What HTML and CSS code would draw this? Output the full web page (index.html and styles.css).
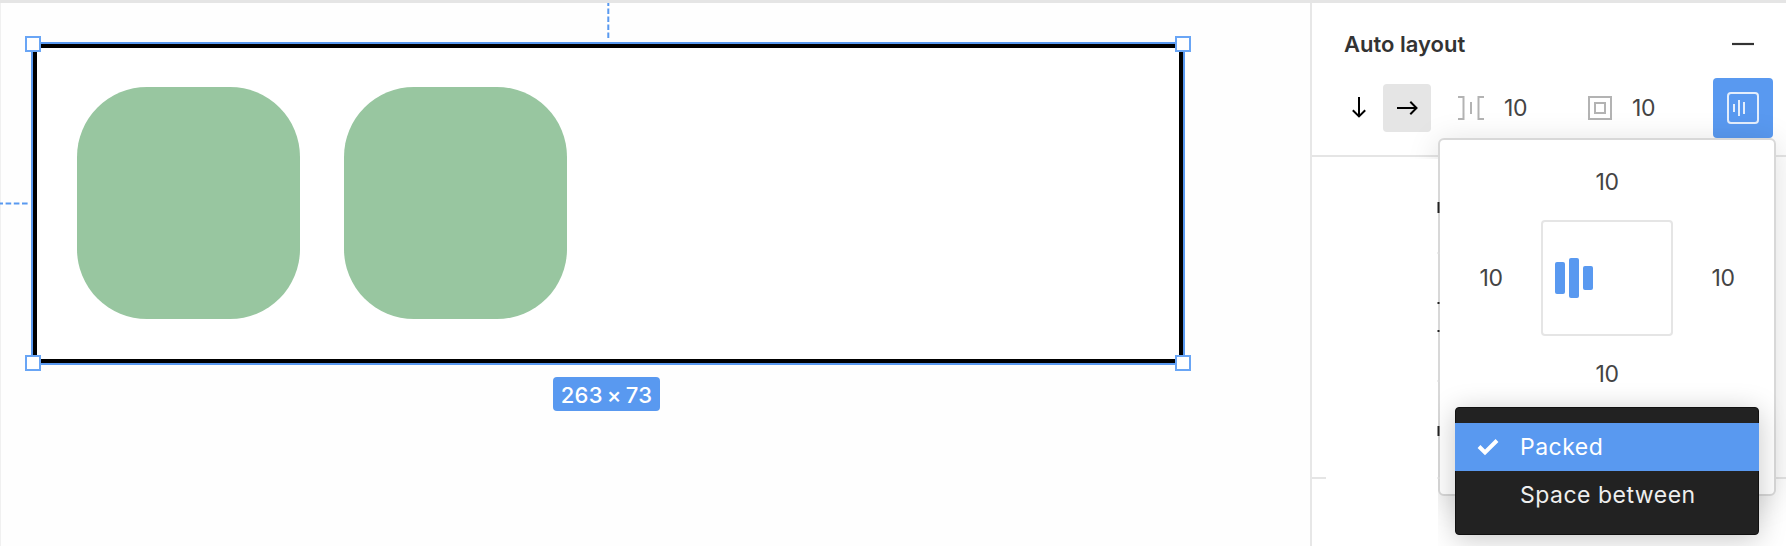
FILE: index.html
```html
<!DOCTYPE html>
<html lang="en">
<head>
<meta charset="utf-8">
<title>Auto layout</title>
<link rel="stylesheet" href="styles.css">
</head>
<body>
<div class="app">
  <main class="canvas">
    <svg class="guide guide-top" width="3" height="36" viewBox="0 0 3 36"><path d="M1.3 0V36" stroke="#5999f0" stroke-width="2" stroke-dasharray="5.6 2.4" stroke-dashoffset="2.6"/></svg>
    <svg class="guide guide-left" width="30" height="3" viewBox="0 0 30 3"><path d="M0 1.5H29" stroke="#5999f0" stroke-width="2" stroke-dasharray="5.6 2.6" stroke-dashoffset="2.6"/></svg>
    <div class="frame">
      <div class="shape"></div>
      <div class="shape"></div>
      <i class="handle tl"></i><i class="handle tr"></i><i class="handle bl"></i><i class="handle br"></i>
    </div>
    <div class="size-badge">263 × 73</div>
  </main>
  <aside class="panel">
    <section class="auto-layout">
      <header class="heading">
        <h2 class="title">Auto layout</h2>
        <svg class="minus" width="22" height="4" viewBox="0 0 22 4"><path d="M0 2H22" stroke="#333" stroke-width="2.2"/></svg>
      </header>
      <div class="controls">
        <button class="direction"><svg width="20" height="24" viewBox="0 0 20 24" fill="none" stroke="#000" stroke-width="2"><path d="M10 1V20.5M3.8 14.2L10 20.4L16.2 14.2"/></svg></button>
        <button class="direction active"><svg width="24" height="20" viewBox="0 0 24 20" fill="none" stroke="#000" stroke-width="2"><path d="M2 10H21.5M15.3 3.8L21.5 10L15.3 16.2"/></svg></button>
        <svg class="spacing-icon" width="28" height="26" viewBox="0 0 28 26" fill="none" stroke="#b3b3b3" stroke-width="2"><path d="M1 2H6.5V24H1M27 2H21.5V24H27M14 7V19"/></svg>
        <span class="value spacing-value">10</span>
        <svg class="padding-icon" width="26" height="26" viewBox="0 0 26 26" fill="none" stroke="#b3b3b3" stroke-width="2"><path d="M2 2H24V24H2ZM8 8H18V18H8Z"/></svg>
        <span class="value">10</span>
        <button class="align"><svg width="34" height="34" viewBox="0 0 34 34" fill="none" stroke="#e4eefc" stroke-width="2"><rect x="2" y="2" width="30" height="30" rx="3"/><path d="M8 13V21M13 9V25M18 11V23"/></svg></button>
      </div>
    </section>
    <div class="section-end"></div>
    <div class="cover"></div>
    <svg class="remnants" width="3" height="360" viewBox="0 0 3 360"><path d="M1.5 4V15M1.5 104V106M1.5 132V134M1.5 228V238" stroke="#222" stroke-width="2"/><path d="M0 55H3M0 183H3M0 280H3" stroke="#ddd"/></svg>
    <div class="popover">
      <div class="value">10</div>
      <div class="middle">
        <span class="value">10</span>
        <div class="align-box"><i class="bar first"></i><i class="bar second"></i><i class="bar third"></i></div>
        <span class="value">10</span>
      </div>
      <div class="value">10</div>
      <div class="menu">
        <div class="item selected"><svg width="22" height="18" viewBox="0 0 22 18" fill="none" stroke="#fff" stroke-width="4"><path d="M2 8.5L8 14.5L20 2.5"/></svg><span>Packed</span></div>
        <div class="item"><span>Space between</span></div>
      </div>
    </div>
  </aside>
</div>
</body>
</html>
```
FILE: styles.css
```css
* { box-sizing: border-box; }
body { margin: 0; font-family: Inter, "Liberation Sans", sans-serif; color: #333; background: #fff; }
.app { display: flex; width: 1786px; height: 546px; overflow: hidden; border-top: 3px solid #e5e5e5; }
.canvas { position: relative; width: 1310px; border-left: 1px solid #f0f0f0; background: #fefefe; }
.guide { position: absolute; }
.guide-top { left: 606px; top: 0; }
.guide-left { left: -1px; top: 199px; }
.frame { position: absolute; left: 30px; top: 39px; width: 1154px; height: 323px; display: flex; gap: 44px; padding: 39px 0 0 40px; border: 6px solid #000; background: #fff; }
.frame::before { content: ""; position: absolute; inset: -6px; border: 2px solid #5999f0; }
.shape { width: 223px; height: 232px; border-radius: 70px; background: #98c6a0; }
.handle { position: absolute; width: 16px; height: 16px; border: 2px solid #69a5f5; background: #fff; }
.tl { left: -12px; top: -12px; } .tr { right: -12px; top: -12px; }
.bl { left: -12px; bottom: -12px; } .br { right: -12px; bottom: -12px; }
.size-badge { position: absolute; left: 552px; top: 374px; width: 107px; height: 34px; border-radius: 4px; background: #5999f0; color: #fff; text-align: center; font-size: 22px; font-weight: 500; line-height: 36px; letter-spacing: .3px; word-spacing: -2.2px; }
.panel { position: relative; width: 476px; border-left: 2px solid #e7e7e7; background: #fff; }
.auto-layout { height: 154px; border-bottom: 2px solid #e5e5e5; padding-top: 27px; }
.heading { display: flex; justify-content: space-between; align-items: center; height: 28px; padding: 0 32px 0 32px; }
.title { margin: 0; font-size: 22px; line-height: 28px; font-weight: 600; }
.controls { display: flex; align-items: center; height: 60px; margin-top: 20px; padding-left: 23px; }
button { display: flex; align-items: center; justify-content: center; padding: 0; border: 0; }
.direction { width: 48px; height: 48px; border-radius: 4px; background: transparent; }
.active { background: #e5e5e5; }
.spacing-icon { margin-left: 26px; }
.value { width: 26px; font-size: 23px; line-height: 28px; color: #444; letter-spacing: -0.4px; }
.popover .value { text-indent: 1.5px; }
.spacing-value { margin-right: 57px; }
.spacing-icon + .value, .padding-icon + .value { margin-left: 19px; }
.align { width: 60px; height: 60px; margin-left: 55px; border-radius: 4px; background: #5999f0; }
.section-end { margin-top: 320px; height: 2px; background: #e5e5e5; }
.popover { position: absolute; left: 126px; top: 135px; width: 338px; height: 358px; display: flex; flex-direction: column; align-items: center; border: 2px solid #d8d8d8; border-radius: 6px; background: #fff; box-shadow: 0 4px 32px rgba(0,0,0,.13); padding-top: 28px; }
.cover { position: absolute; z-index: 1; left: 14px; top: 156px; width: 112px; height: 390px; background: #fff; }
.remnants { position: absolute; z-index: 1; left: 125px; top: 195px; }
.middle { display: flex; align-items: center; justify-content: space-between; width: 258px; margin: 24px 0; }
.align-box { display: flex; align-items: center; gap: 4px; width: 132px; height: 116px; padding-left: 12px; border: 2px solid #e5e5e5; border-radius: 4px; }
.bar { width: 10px; border-radius: 2px; background: #5999f0; }
.first { height: 32px; } .second { height: 40px; } .third { height: 24px; }
.menu { position: absolute; left: 15px; top: 267px; width: 304px; height: 128px; padding-top: 15px; border: 1px solid #111; border-radius: 4px; background: #222; box-shadow: 0 4px 28px rgba(0,0,0,.22); color: #eee; font-size: 23px; }
.item { display: grid; grid-template-columns: 43px 1fr; align-items: center; height: 48px; margin: 0 -1px; padding-left: 22px; letter-spacing: .5px; }
.item span { grid-column: 2; }
.selected { background: #5999f0; color: #fff; }
```
